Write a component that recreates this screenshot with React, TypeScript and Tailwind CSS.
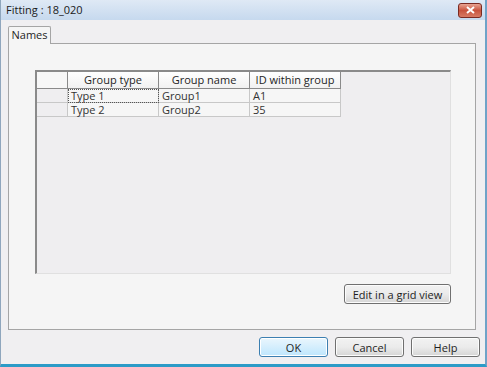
const font = { fontFamily: '"Open Sans", "Noto Sans", sans-serif' };

function Btn({ label, w, primary }: { label: string; w: string; primary?: boolean }) {
  return (
    <button
      className={`${w} h-[20px] rounded-[3px] border text-[11px] leading-none text-[#1e1e1e] ${
        primary
          ? "border-[#3c7fb1] bg-gradient-to-b from-[#eaf6fd] to-[#bee6fd] shadow-[inset_0_0_0_1px_#ffffff]"
          : "border-[#707070] bg-gradient-to-b from-[#f2f2f2] via-[#ebebeb] to-[#d5d5d5] shadow-[inset_0_0_0_1px_#fcfcfc]"
      }`}
    >
      {label}
    </button>
  );
}

const rows = [
  ["Type 1", "Group1", "A1"],
  ["Type 2", "Group2", "35"],
];

export default function App() {
  return (
    <div
      className="w-[487px] h-[367px] flex flex-col bg-[#f0eff1] border-l border-r-[2px] border-b-[3px] border-l-[#8fa6bd] border-r-[#6fa3c8] border-b-[#2c9bc7] text-[#1e1e1e] overflow-hidden"
      style={font}
    >
      {/* Title bar */}
      <div className="h-[20px] shrink-0 flex items-center justify-between pl-[5px] pr-[3px] bg-gradient-to-b from-[#dfe9f5] to-[#c6d9ee]">
        <span className="text-[11px] text-[#1a1a1a]">Fitting : 18_020</span>
        <div className="w-[24px] h-[15px] rounded-[3px] border border-[#7a2a22] bg-gradient-to-b from-[#e8a493] via-[#c8533e] to-[#d77a64] flex items-center justify-center">
          <svg width="9" height="8" viewBox="0 0 9 8">
            <path d="M1 1 L8 7 M8 1 L1 7" stroke="#ffffff" strokeWidth="2" />
          </svg>
        </div>
      </div>

      {/* Body */}
      <div className="flex-1 flex flex-col pt-[6px] pl-[7px] pr-[9px]">
        {/* Tab header */}
        <div className="flex">
          <div className="relative z-10 h-[18px] w-[43px] -mb-px border border-b-0 border-[#a5a5a5] rounded-t-[2px] bg-[#f5f5f5] text-[11px] flex items-center justify-center">
            Names
          </div>
        </div>

        {/* Tab panel */}
        <div className="h-[287px] border border-[#a5a5a5] bg-[#f5f5f5] pt-[26px] pl-[26px] pr-[24px] flex flex-col">
          {/* Grid */}
          <div className="h-[204px] bg-[#efeef0] border-l-[2px] border-t-[2px] border-l-[#8a8a8a] border-t-[#8a8a8a] border-r border-b border-r-[#e0e0e0] border-b-[#e0e0e0] text-[11px]">
            <div className="flex h-[17px]">
              <div className="w-[31px] border-r border-b border-[#8a8a8a] bg-[#f7f7f7]" />
              {["Group type", "Group name", "ID within group"].map((h) => (
                <div
                  key={h}
                  className="w-[91px] border-r border-b border-[#8a8a8a] bg-gradient-to-b from-[#ffffff] to-[#f1f1f1] flex items-center justify-center"
                >
                  {h}
                </div>
              ))}
            </div>
            {rows.map((r, i) => (
              <div key={i} className="flex h-[14px]">
                <div className="w-[31px] border-r border-b border-[#c8c8c8] bg-[#efeef0]" />
                {r.map((c, j) => (
                  <div
                    key={j}
                    className={`w-[91px] border-r border-b border-[#c8c8c8] bg-[#f6f6f6] pl-[3px] flex items-center leading-none text-[#333] ${
                      i === 0 && j === 0 ? "outline outline-1 outline-dotted outline-[#555] -outline-offset-1" : ""
                    }`}
                  >
                    {c}
                  </div>
                ))}
              </div>
            ))}
          </div>

          <div className="flex justify-end mt-[10px]">
            <Btn label="Edit in a grid view" w="w-[107px]" />
          </div>
        </div>

        {/* Dialog buttons */}
        <div className="flex justify-end gap-[7px] mt-[7px] -mr-[4px]">
          <Btn label="OK" w="w-[69px]" primary />
          <Btn label="Cancel" w="w-[69px]" />
          <Btn label="Help" w="w-[69px]" />
        </div>
      </div>
    </div>
  );
}
